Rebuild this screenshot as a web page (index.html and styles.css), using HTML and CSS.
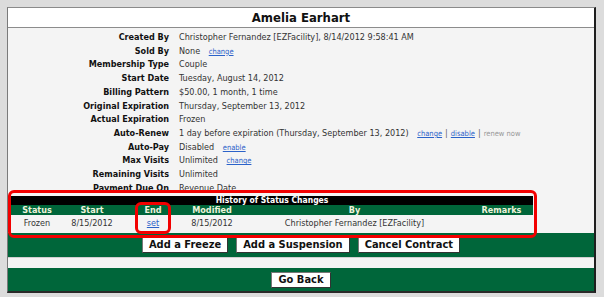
FILE: index.html
```html
<!DOCTYPE html>
<html lang="en">

<head>
    <meta charset="UTF-8">
    <title>Membership - Amelia Earhart</title>
    <link rel="stylesheet" href="styles.css">
</head>

<body>
    <div id="frame">
        <div id="title">Amelia Earhart</div>

        <!-- Membership details -->
        <div id="details">
            <table class="info">
                <tr><th>Created By</th><td>Christopher Fernandez [EZFacility], 8/14/2012 9:58:41 AM</td></tr>
                <tr><th>Sold By</th><td>None <a href="#" class="small-link">change</a></td></tr>
                <tr><th>Membership Type</th><td>Couple</td></tr>
                <tr><th>Start Date</th><td>Tuesday, August 14, 2012</td></tr>
                <tr><th>Billing Pattern</th><td>$50.00, 1 month, 1 time</td></tr>
                <tr><th>Original Expiration</th><td>Thursday, September 13, 2012</td></tr>
                <tr><th>Actual Expiration</th><td>Frozen</td></tr>
                <tr><th>Auto-Renew</th><td>1 day before expiration (Thursday, September 13, 2012) <a href="#" class="small-link">change</a><span class="sep">|</span><a href="#" class="small-link tight">disable</a><span class="sep">|</span><span class="muted">renew now</span></td></tr>
                <tr><th>Auto-Pay</th><td>Disabled <a href="#" class="small-link">enable</a></td></tr>
                <tr><th>Max Visits</th><td>Unlimited <a href="#" class="small-link">change</a></td></tr>
                <tr><th>Remaining Visits</th><td>Unlimited</td></tr>
                <tr><th>Payment Due On</th><td>Revenue Date</td></tr>
            </table>
        </div>

        <!-- History of status changes -->
        <div id="history">
            <table class="status">
                <colgroup>
                    <col class="c-status">
                    <col class="c-start">
                    <col class="c-end">
                    <col class="c-mod">
                    <col class="c-by">
                    <col class="c-rem">
                </colgroup>
                <tr class="caption"><td colspan="6">History of Status Changes</td></tr>
                <tr class="heads">
                    <th>Status</th>
                    <th>Start</th>
                    <th>End</th>
                    <th>Modified</th>
                    <th>By</th>
                    <th>Remarks</th>
                </tr>
                <tr class="row">
                    <td>Frozen</td>
                    <td>8/15/2012</td>
                    <td><a href="#">set</a></td>
                    <td>8/15/2012</td>
                    <td>Christopher Fernandez [EZFacility]</td>
                    <td></td>
                </tr>
            </table>
            <!-- red annotation marks -->
            <div class="mark mark-box"></div>
            <div class="mark mark-end"></div>
        </div>

        <div class="button-bar">
            <button class="btn">Add a Freeze</button>
            <button class="btn">Add a Suspension</button>
            <button class="btn">Cancel Contract</button>
        </div>
        <div id="spacer"></div>
        <div class="button-bar back-bar">
            <button class="btn">Go Back</button>
        </div>
    </div>
</body>

</html>
```

FILE: styles.css
```css
body {
    margin: 0;
    padding: 7px 0 0 7px;
    background-color: #dcdcdc;
    font-family: "DejaVu Sans Condensed", "DejaVu Sans", sans-serif;
    font-size: 9px;
    color: #222;
}

#frame {
    width: 586px;
    border-top: 1px solid #8a8a8a;
    border-left: 1px solid #7a7a7a;
    border-right: 2px solid #1e1e1e;
    border-bottom: 2px solid #2a2a2a;
    background-color: #f4f4f4;
}

#title {
    height: 19px;
    line-height: 20px;
    background-color: #fff;
    border-bottom: 1px solid #8c8c8c;
    text-align: center;
    font-weight: bold;
    font-size: 13px;
    color: #111;
}

#details {
    height: 159px;
    padding-top: 3px;
    overflow: hidden;
}

.info {
    border-spacing: 0;
}

.info th {
    width: 161px;
    padding: 0 5px 0 0;
    text-align: right;
    font-weight: bold;
    color: #111;
    line-height: 13.7px;
    white-space: nowrap;
}

.info td {
    padding: 0 0 0 5px;
    color: #333;
    line-height: 13.7px;
    white-space: nowrap;
}

.small-link {
    font-size: 7.5px;
    color: #2b62c9;
    margin-left: 6px;
}

.small-link.tight {
    margin-left: 0;
}

.sep {
    color: #666;
    margin: 0 3px;
}

.muted {
    font-size: 7.5px;
    color: #999;
}

#history {
    position: relative;
    height: 37px;
    padding: 6px 0 0 3px;
}

.status {
    width: 522px;
    border-spacing: 0;
    table-layout: fixed;
}

.c-status { width: 52px; }
.c-start { width: 58px; }
.c-end { width: 64px; }
.c-mod { width: 54px; }
.c-by { width: 231px; }
.c-rem { width: 63px; }

.status .caption td {
    height: 9px;
    line-height: 9px;
    padding: 0;
    background-color: #000;
    color: #fff;
    font-weight: bold;
    font-size: 8.5px;
    text-align: center;
}

.status .heads th {
    height: 10px;
    line-height: 10px;
    padding: 0;
    background-color: #00663a;
    color: #eef3dc;
    font-size: 9px;
}

.status .row td {
    height: 15px;
    padding: 0;
    text-align: center;
    color: #333;
    background-color: #f4f4f4;
    white-space: nowrap;
}

.status a {
    color: #2b62c9;
}

.mark {
    position: absolute;
    border: 3px solid #f20000;
    border-radius: 6px;
}

.mark-box {
    left: 0;
    top: 0;
    width: 523px;
    height: 42px;
}

.mark-end {
    left: 127px;
    top: 12px;
    width: 30px;
    height: 26px;
}

.button-bar {
    height: 24px;
    background-color: #00663a;
    display: flex;
    justify-content: center;
    align-items: center;
    gap: 8px;
}

.back-bar {
    height: 23px;
}

#spacer {
    height: 11px;
    border-top: 1px solid #d0d0d0;
    box-sizing: border-box;
}

.btn {
    height: 16px;
    padding: 0 6px;
    background-color: #fff;
    border: 1px solid #777;
    border-right-color: #333;
    border-bottom-color: #333;
    font-family: "DejaVu Sans Condensed", "DejaVu Sans", sans-serif;
    font-size: 11px;
    font-weight: bold;
    color: #111;
    line-height: 14px;
    cursor: pointer;
}
```
